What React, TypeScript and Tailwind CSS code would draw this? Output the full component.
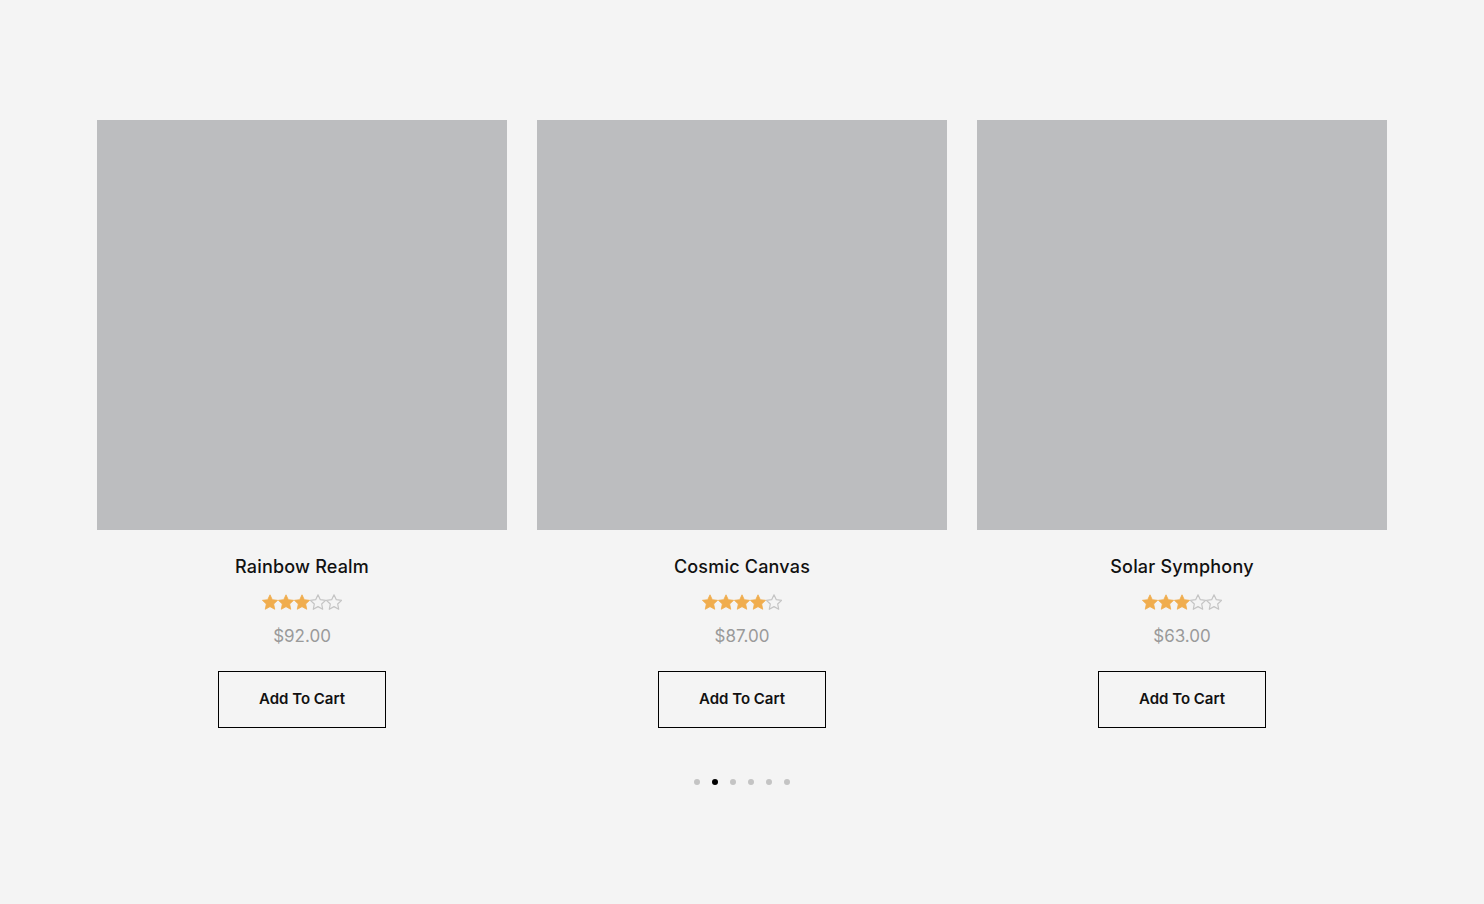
import React from "react";

const products = [
    { name: "Rainbow Realm", rating: 3, price: "$92.00" },
    { name: "Cosmic Canvas", rating: 4, price: "$87.00" },
    { name: "Solar Symphony", rating: 3, price: "$63.00" },
];

function Star({ filled }: { filled: boolean }) {
    return (
        <svg width="16" height="16" viewBox="2 1.5 20 20" className="block">
            <path
                d="M12 2.5l2.9 6.1 6.6.8-4.9 4.6 1.3 6.6L12 17.3l-5.9 3.3 1.3-6.6-4.9-4.6 6.6-.8z"
                fill={filled ? "#f0ad4e" : "none"}
                stroke={filled ? "#f0ad4e" : "#c4c4c4"}
                strokeWidth={filled ? 1 : 1.5}
                strokeLinejoin="round"
            />
        </svg>
    );
}

export default function App() {
    return (
        <div className="min-h-screen bg-[#f4f4f4] pt-[120px] font-['Inter',sans-serif]">
            <div className="mx-auto w-[1290px] grid grid-cols-3 gap-[30px]">
                {products.map((p) => (
                    <div key={p.name} className="flex flex-col items-center">
                        <div className="w-[410px] h-[410px] bg-[#bcbdbf]" />
                        <h3 className="mt-[26px] text-[18px] leading-[22px] font-medium text-[#111] tracking-[0.2px]">
                            {p.name}
                        </h3>
                        <div className="mt-[16px] flex">
                            {[0, 1, 2, 3, 4].map((i) => (
                                <Star key={i} filled={i < p.rating} />
                            ))}
                        </div>
                        <div className="mt-[16px] text-[17px] leading-[20px] text-[#9a9a9a]">{p.price}</div>
                        <button className="mt-[25px] w-[168px] h-[57px] border border-black text-[15px] font-semibold text-[#111]">
                            Add To Cart
                        </button>
                    </div>
                ))}
            </div>
            <div className="mt-[51px] flex justify-center gap-[12px]">
                {[0, 1, 2, 3, 4, 5].map((i) => (
                    <span
                        key={i}
                        className={
                            i === 1
                                ? "w-[6px] h-[6px] rounded-full bg-black"
                                : "w-[6px] h-[6px] rounded-full bg-[#c4c4c4]"
                        }
                    />
                ))}
            </div>
        </div>
    );
}
